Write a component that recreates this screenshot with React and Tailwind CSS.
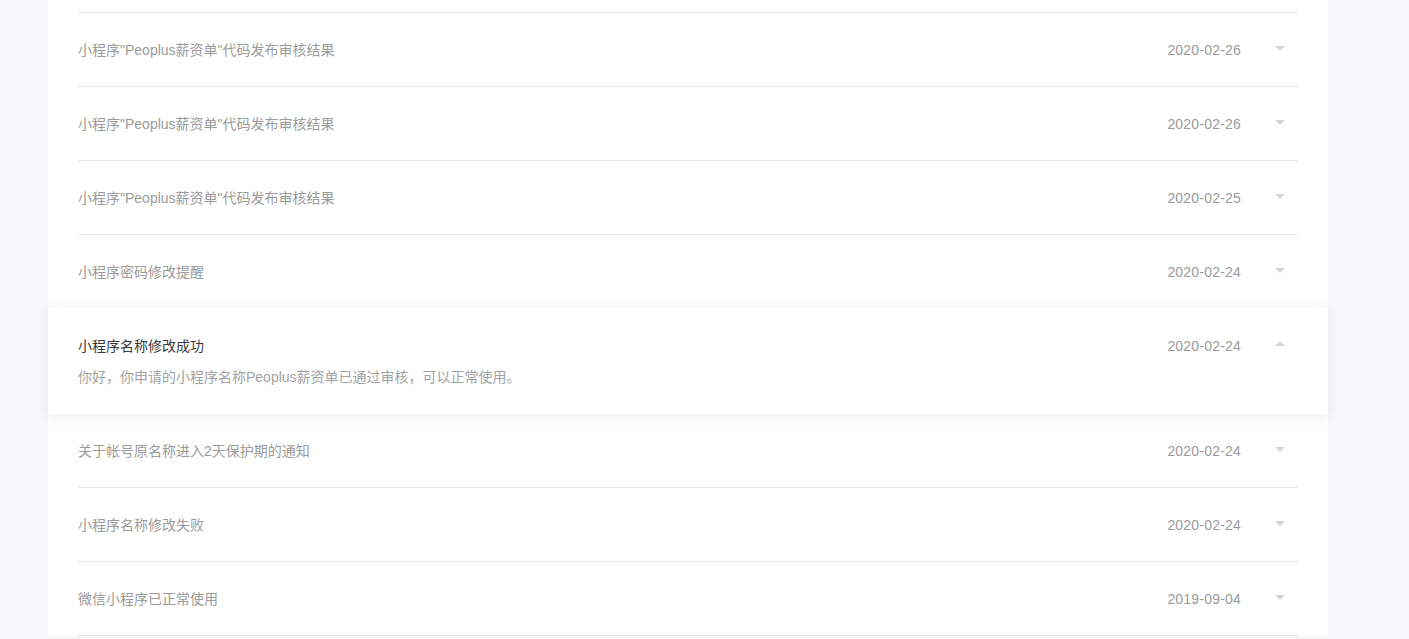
import React from 'react';

const items = [
  { title: '小程序"Peoplus薪资单"代码发布审核结果', date: '2020-02-26' },
  { title: '小程序"Peoplus薪资单"代码发布审核结果', date: '2020-02-26' },
  { title: '小程序"Peoplus薪资单"代码发布审核结果', date: '2020-02-25' },
  { title: '小程序密码修改提醒', date: '2020-02-24' },
  {
    title: '小程序名称修改成功',
    date: '2020-02-24',
    body: '你好，你申请的小程序名称Peoplus薪资单已通过审核，可以正常使用。',
    open: true,
  },
  { title: '关于帐号原名称进入2天保护期的通知', date: '2020-02-24' },
  { title: '小程序名称修改失败', date: '2020-02-24' },
  { title: '微信小程序已正常使用', date: '2019-09-04' },
];

const Arrow = ({ up }) => (
  <svg width="10" height="6" viewBox="0 0 10 6" className="block">
    {up ? <path d="M0 6 L5 1 L10 6 Z" fill="#d6d6d6" /> : <path d="M0 0 L10 0 L5 5 Z" fill="#d6d6d6" />}
  </svg>
);

const Row = ({ item }) => {
  if (item.open) {
    return (
      <div className="relative z-10 -mt-px bg-white px-[30px] pt-[27px] pb-[26px] shadow-[0_2px_12px_rgba(0,0,0,0.08)]">
        <div className="flex items-start">
          <div className="flex-1">
            <div className="text-[14px] leading-[22px] text-[#383838]">{item.title}</div>
            <div className="mt-[9px] text-[14px] leading-[22px] text-[#a3a3a3]">{item.body}</div>
          </div>
          <div className="w-[123px] text-right text-[14px] leading-[22px] tracking-[0.2px] text-[#9b9b9b]">{item.date}</div>
          <div className="w-[57px] pt-[5px] pl-[34px]">
            <Arrow up />
          </div>
        </div>
      </div>
    );
  }
  return (
    <div className="px-[30px]">
      <div className="flex h-[74px] items-center border-b border-[#e7e7e7]">
        <div className="flex-1 text-[14px] leading-[22px] text-[#9b9b9b]">{item.title}</div>
        <div className="w-[123px] text-right text-[14px] leading-[22px] tracking-[0.2px] text-[#9b9b9b]">{item.date}</div>
        <div className="w-[57px] self-start pt-[33px] pl-[34px]">
          <Arrow />
        </div>
      </div>
    </div>
  );
};

export default function App() {
  return (
    <div
      className="min-h-[639px] bg-[#f6f7f9] px-[48px]"
      style={{ fontFamily: '"Helvetica Neue", "Liberation Sans", "Noto Sans CJK SC", sans-serif' }}
    >
      <div className="w-[1280px] bg-white">
        <div className="px-[30px]">
          <div className="h-[13px] border-b border-[#e7e7e7]" />
        </div>
        {items.map((item, i) => (
          <Row key={i} item={item} />
        ))}
      </div>
    </div>
  );
}
